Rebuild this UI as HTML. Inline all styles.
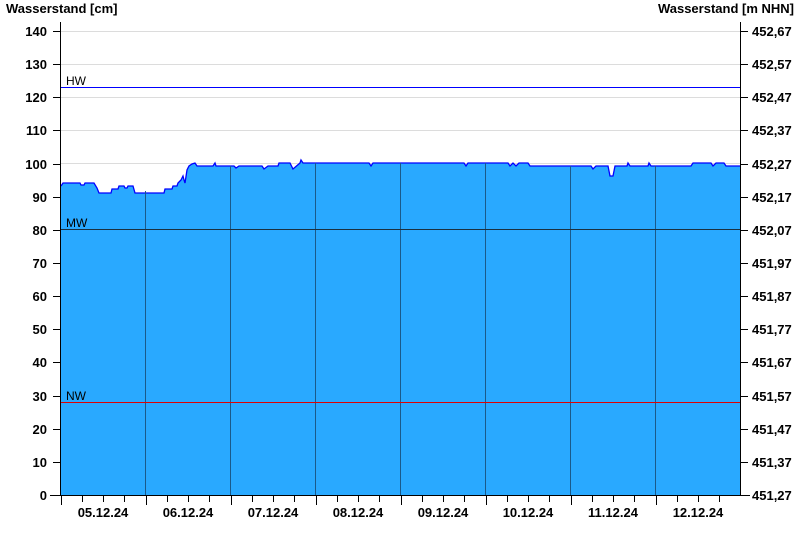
<!DOCTYPE html>
<html><head><style>
html,body{margin:0;padding:0;background:#fff;width:800px;height:550px;overflow:hidden}
svg text{font-family:"Liberation Sans",Arial,sans-serif;font-weight:bold;font-size:13px;fill:#000}
</style></head><body>
<svg width="800" height="550" xmlns="http://www.w3.org/2000/svg">
<text x="6" y="13">Wasserstand [cm]</text>
<text x="794" y="13" text-anchor="end">Wasserstand [m NHN]</text>
<g stroke="#dcdcdc" stroke-width="1" shape-rendering="crispEdges">
<line x1="61" x2="740" y1="31.5" y2="31.5"/><line x1="61" x2="740" y1="64.5" y2="64.5"/><line x1="61" x2="740" y1="97.5" y2="97.5"/><line x1="61" x2="740" y1="130.5" y2="130.5"/><line x1="61" x2="740" y1="163.5" y2="163.5"/>
</g>
<polygon fill="#29a9ff" points="61,495 61,186 63,183 80,183 81,185 84,185 85,183 94,183 97,188 99,193 111,193 112,189 118,189 119,186 124,186 125,188 127,188 128,186 133,186 135,193 164,193 165,189 172,189 173,186 177,186 178,183 181,180 183,176 184,180 185,183 187,170 189,166 192,164 195,163 197,166 213,166 215,163 216,166 234,166 236,168 239,166 262,166 264,169 268,166 278,166 279,163 290,163 293,169 300,163 301,160 303,163 369,163 371,166 373,163 464,163 466,166 468,163 508,163 510,166 513,163 516,166 519,163 528,163 530,166 591,166 593,169 596,166 608,166 610,176 613,176 615,166 627,166 628,163 630,166 648,166 649,163 651,166 691,166 693,163 711,163 713,166 716,163 724,163 726,166 740,166 740,495"/>
<polyline fill="none" stroke="#0000ff" stroke-width="1.3" points="61,186 63,183 80,183 81,185 84,185 85,183 94,183 97,188 99,193 111,193 112,189 118,189 119,186 124,186 125,188 127,188 128,186 133,186 135,193 164,193 165,189 172,189 173,186 177,186 178,183 181,180 183,176 184,180 185,183 187,170 189,166 192,164 195,163 197,166 213,166 215,163 216,166 234,166 236,168 239,166 262,166 264,169 268,166 278,166 279,163 290,163 293,169 300,163 301,160 303,163 369,163 371,166 373,163 464,163 466,166 468,163 508,163 510,166 513,163 516,166 519,163 528,163 530,166 591,166 593,169 596,166 608,166 610,176 613,176 615,166 627,166 628,163 630,166 648,166 649,163 651,166 691,166 693,163 711,163 713,166 716,163 724,163 726,166 740,166"/>
<g stroke="#1a5a8a" stroke-width="1" shape-rendering="crispEdges">
<line x1="145.5" x2="145.5" y1="191" y2="495"/><line x1="230.5" x2="230.5" y1="166" y2="495"/><line x1="315.5" x2="315.5" y1="163" y2="495"/><line x1="400.5" x2="400.5" y1="163" y2="495"/><line x1="485.5" x2="485.5" y1="163" y2="495"/><line x1="570.5" x2="570.5" y1="166" y2="495"/><line x1="655.5" x2="655.5" y1="166" y2="495"/>
</g>
<g shape-rendering="crispEdges">
<line x1="61" x2="740" y1="87.5" y2="87.5" stroke="#0000ff"/>
<line x1="61" x2="740" y1="229.5" y2="229.5" stroke="#1a3040"/>
<line x1="61" x2="740" y1="402.5" y2="402.5" stroke="#e00000"/>
</g>
<text x="66" y="85" style="font-weight:normal;font-size:12px">HW</text><text x="66" y="227" style="font-weight:normal;font-size:12px">MW</text><text x="66" y="400" style="font-weight:normal;font-size:12px">NW</text>
<g stroke="#000" stroke-width="1" shape-rendering="crispEdges">
<line x1="60.5" x2="60.5" y1="22" y2="496"/><line x1="740.5" x2="740.5" y1="22" y2="496"/><line x1="50" x2="750" y1="495.5" y2="495.5"/>
</g>
<g stroke="#000" id="ticks" shape-rendering="crispEdges"></g>
<g id="labels"></g>
<script>
var t=document.getElementById('ticks'),l=document.getElementById('labels'),ns='http://www.w3.org/2000/svg';
function ln(a,b,c,d){var e=document.createElementNS(ns,'line');e.setAttribute('x1',a);e.setAttribute('x2',b);e.setAttribute('y1',c);e.setAttribute('y2',d);t.appendChild(e);}
function tx(x,y,s,an){var e=document.createElementNS(ns,'text');e.setAttribute('x',x);e.setAttribute('y',y);if(an)e.setAttribute('text-anchor',an);e.textContent=s;l.appendChild(e);}
for(var k=0;k<=14;k++){var y=Math.round(495-k*33.143)+0.5;ln(53,60,y,y);ln(741,748,y,y);tx(47,y+4.5,String(k*10),'end');tx(752,y+4.5,(451.27+k*0.1).toFixed(2).replace('.',','));}
var d=['05.12.24','06.12.24','07.12.24','08.12.24','09.12.24','10.12.24','11.12.24','12.12.24'];
for(var i=0;i<8;i++){var x0=60.5+i*85;for(var j=0;j<4;j++){var x=Math.round(x0+j*21.25)+0.5;ln(x,x,496,j==0?505:502);}tx(x0+42.5,517,d[i],'middle');}
</script>
</svg>
</body></html>
